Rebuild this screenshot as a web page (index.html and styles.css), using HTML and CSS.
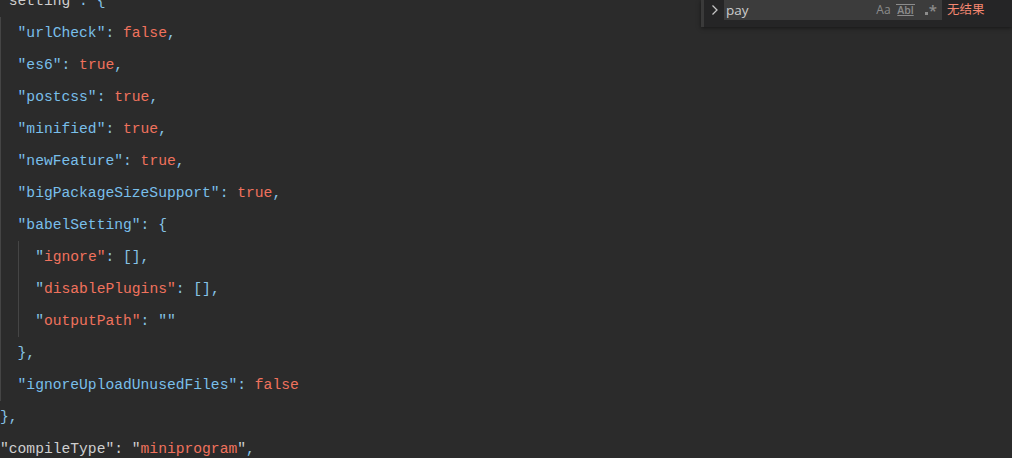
FILE: index.html
```html
<!DOCTYPE html>
<html lang="zh-CN">
<head>
    <meta charset="UTF-8">
    <title>project.config.json</title>
    <link rel="stylesheet" href="styles.css">
</head>
<body>
    <div class="editor">
        <div class="code">
            <div class="line"><span class="plain">"setting"</span><span class="punc">: {</span></div>
            <div class="line"><span class="ind"></span><span class="key">"urlCheck"</span><span class="punc">: </span><span class="val">false</span><span class="punc">,</span></div>
            <div class="line"><span class="ind"></span><span class="key">"es6"</span><span class="punc">: </span><span class="val">true</span><span class="punc">,</span></div>
            <div class="line"><span class="ind"></span><span class="key">"postcss"</span><span class="punc">: </span><span class="val">true</span><span class="punc">,</span></div>
            <div class="line"><span class="ind"></span><span class="key">"minified"</span><span class="punc">: </span><span class="val">true</span><span class="punc">,</span></div>
            <div class="line"><span class="ind"></span><span class="key">"newFeature"</span><span class="punc">: </span><span class="val">true</span><span class="punc">,</span></div>
            <div class="line"><span class="ind"></span><span class="key">"bigPackageSizeSupport"</span><span class="punc">: </span><span class="val">true</span><span class="punc">,</span></div>
            <div class="line"><span class="ind"></span><span class="key">"babelSetting"</span><span class="punc">: {</span></div>
            <div class="line"><span class="ind"></span><span class="ind"></span><span class="punc">"</span><span class="val">ignore"</span><span class="punc">: [],</span></div>
            <div class="line"><span class="ind"></span><span class="ind"></span><span class="punc">"</span><span class="val">disablePlugins"</span><span class="punc">: [],</span></div>
            <div class="line"><span class="ind"></span><span class="ind"></span><span class="punc">"</span><span class="val">outputPath"</span><span class="punc">: ""</span></div>
            <div class="line"><span class="ind"></span><span class="punc">},</span></div>
            <div class="line"><span class="ind"></span><span class="key">"ignoreUploadUnusedFiles"</span><span class="punc">: </span><span class="val">false</span></div>
            <div class="line"><span class="punc">},</span></div>
            <div class="line"><span class="plain">"compileType"</span><span class="plain">: "</span><span class="val">miniprogram</span><span class="plain">"</span><span class="punc">,</span></div>
        </div>

        <div class="find">
            <span class="toggle">
                <svg width="8" height="12" viewBox="0 0 8 12"><path d="M1.5 1.5 L6 6 L1.5 10.5" fill="none" stroke="#c5c5c5" stroke-width="1.3"/></svg>
            </span>
            <div class="find-input">
                <span class="query">pay</span>
                <span class="opts">
                    <span class="opt">Aa</span>
                    <span class="opt word">Abl</span>
                    <span class="opt regex"><span class="dot"></span><span class="star">*</span></span>
                </span>
            </div>
            <span class="result">无结果</span>
        </div>
    </div>
</body>
</html>
```

FILE: styles.css
```css
body {
    margin: 0;
    padding: 0;
    background: #2b2b2b;
    overflow: hidden;
}

.editor {
    position: relative;
    height: 458px;
    overflow: hidden;
}

.code {
    margin-top: -15px;
    font-family: "Liberation Mono", monospace;
    font-size: 14.65px;
}

.line {
    height: 32px;
    line-height: 32px;
    white-space: pre;
    display: flex;
    align-items: stretch;
}

.ind {
    display: inline-block;
    width: 17.58px;
    box-sizing: border-box;
    border-left: 1px solid #454545;
    flex-shrink: 0;
}

.key {
    color: #79bfea;
}

.val {
    color: #f0725d;
}

.punc {
    color: #86c3e6;
}

.plain {
    color: #cfcfcf;
}

/* find widget */
.find {
    position: absolute;
    top: 0;
    right: 0;
    width: 308px;
    height: 27px;
    background: #252526;
    border-left: 3px solid #3a3a3a;
    box-shadow: 0 1px 4px rgba(0, 0, 0, 0.5);
    display: flex;
    align-items: flex-start;
    font-family: "Open Sans", "Noto Sans", "Noto Sans CJK SC", sans-serif;
}

.toggle {
    width: 18px;
    height: 20px;
    display: flex;
    align-items: center;
    justify-content: center;
    margin-left: 2px;
}

.find-input {
    width: 218px;
    height: 20px;
    background: #3c3c3c;
    display: flex;
    align-items: center;
    justify-content: space-between;
}

.query {
    color: #cccccc;
    font-size: 13.5px;
    padding-left: 2px;
    line-height: 18px;
}

.opts {
    display: flex;
    align-items: center;
    gap: 3px;
    padding-right: 5px;
}

.opt {
    color: #8c8c8c;
    font-size: 12px;
    width: 19px;
    text-align: center;
    line-height: 14px;
}

.word {
    text-decoration: underline;
    border-top: 1px solid #8c8c8c;
    line-height: 11px;
    font-weight: 600;
    font-size: 10.5px;
}

.regex {
    display: flex;
    justify-content: flex-end;
    align-items: flex-end;
    height: 16px;
    gap: 1px;
}

.regex .dot {
    width: 3px;
    height: 3px;
    background: #8c8c8c;
    margin-bottom: 3px;
}

.regex .star {
    align-self: flex-start;
    font-size: 15px;
    font-weight: 600;
    line-height: 16px;
    height: 11px;
    overflow: visible;
}

.result {
    color: #f48771;
    font-size: 12.5px;
    margin-left: 5px;
    line-height: 20px;
}
```
